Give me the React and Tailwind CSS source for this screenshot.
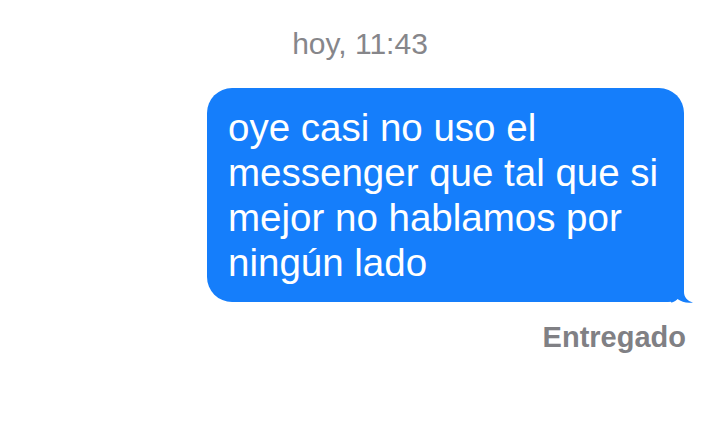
// App.jsx
export default function App() {
  return (
    <div className="w-[720px] h-[446px] bg-white flex flex-col font-['Liberation_Sans',Arial,sans-serif] overflow-hidden">
      {/* timestamp */}
      <div className="mt-[27px] h-[34px] leading-[34px] text-center text-[30px] text-[#86868a]">
        hoy, 11:43
      </div>

      {/* outgoing bubble */}
      <div className="relative self-end mr-[36px] mt-[27px] w-[477px] rounded-[25px] rounded-br-[16px] bg-[#157efb] pl-[21px] pr-[10px] py-[17px] text-white text-[38.5px] leading-[45px]">
        <p>oye casi no uso el</p>
        <p>messenger que tal que si</p>
        <p>mejor no hablamos por</p>
        <p>ningún lado</p>
        <svg
          className="absolute right-[-9px] bottom-[-1px] w-[22px] h-[22px]"
          viewBox="0 0 22 22"
        >
          <path
            d="M0 0 H13 V11 C13 16 16 20 22 21.5 C16 22.5 10.5 21 6.5 18 C4.5 20 2 21.5 0 21.5 Z"
            fill="#157efb"
          />
        </svg>
      </div>

      {/* delivery status */}
      <div className="self-end mr-[34px] mt-[18px] h-[34px] leading-[34px] text-[29px] font-bold text-[#808084]">
        Entregado
      </div>
    </div>
  );
}
